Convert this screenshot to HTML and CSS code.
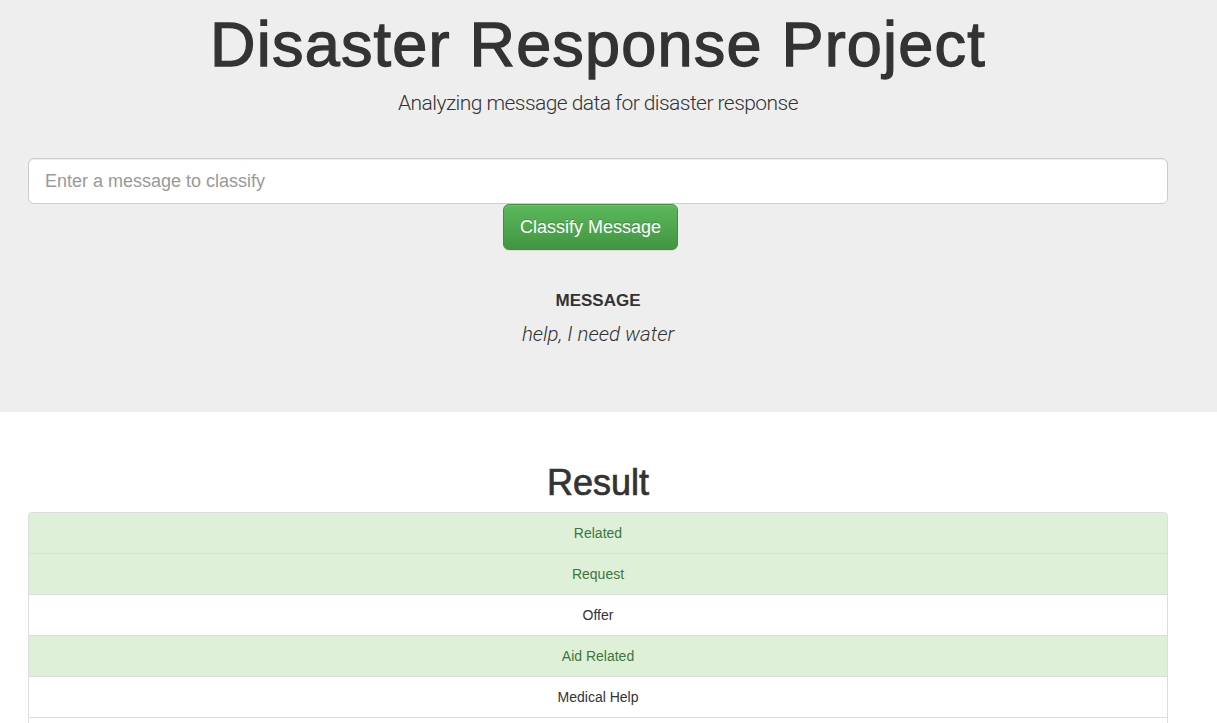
FILE: index.html
```html
<!DOCTYPE html>
<html lang="en">
<head>
<meta charset="utf-8">
<title>Disaster Response Project</title>
<link rel="stylesheet" href="styles.css">
</head>
<body>
  <header class="jumbotron">
    <div class="container">
      <h1 class="title">Disaster Response Project</h1>
      <p class="subtitle">Analyzing message data for disaster response</p>
      <form class="classify-form">
        <input class="form-input" type="text" placeholder="Enter a message to classify">
        <div class="btn-row">
          <button class="btn-success" type="button">Classify Message</button>
        </div>
      </form>
      <div class="message-block">
        <h4 class="message-label">MESSAGE</h4>
        <p class="message-text">help, I need water</p>
      </div>
    </div>
  </header>
  <main class="container results">
    <h1 class="result-title">Result</h1>
    <ul class="list-group">
      <li class="list-item success">Related</li>
      <li class="list-item success">Request</li>
      <li class="list-item">Offer</li>
      <li class="list-item success">Aid Related</li>
      <li class="list-item">Medical Help</li>
      <li class="list-item">Medical Products</li>
    </ul>
  </main>
</body>
</html>
```

FILE: styles.css
```css
* { box-sizing: border-box; }
html, body { margin: 0; padding: 0; }
body {
  font-family: "Liberation Sans", Arial, sans-serif;
  font-size: 14px;
  line-height: 1.42857;
  color: #333;
  background: #fff;
}
.container { width: 1140px; margin: 0 0 0 28px; }

.jumbotron {
  background: #eeeeee;
  height: 412px;
  padding-top: 10px;
}
.title {
  margin: 0;
  font-size: 63px;
  line-height: 69px;
  font-weight: 400;
  text-align: center;
  color: #333;
  letter-spacing: 1.2px;
  -webkit-text-stroke: 1.3px #333;
}
.subtitle {
  margin: 9px 0 0;
  font-family: Roboto, "Liberation Sans", sans-serif;
  font-weight: 300;
  font-size: 21px;
  line-height: 30px;
  text-align: center;
  color: #333;
  letter-spacing: -0.55px;
}
.classify-form { margin-top: 40px; }
.form-input {
  display: block;
  width: 100%;
  height: 46px;
  padding: 10px 16px;
  font-family: "Liberation Sans", Arial, sans-serif;
  font-size: 18px;
  color: #555;
  background: #fff;
  border: 1px solid #ccc;
  border-radius: 6px;
  box-shadow: inset 0 1px 1px rgba(0,0,0,.075);
  outline: none;
}
.form-input::placeholder { color: #999; }
.btn-row { display: flex; padding-left: 475px; }
.btn-success {
  height: 46px;
  width: 175px;
  padding: 0;
  white-space: nowrap;
  font-family: "Liberation Sans", Arial, sans-serif;
  font-size: 18px;
  line-height: 24px;
  color: #fff;
  background-image: linear-gradient(to bottom, #5cb85c 0, #419641 100%);
  border: 1px solid #3e8f3e;
  border-radius: 6px;
  box-shadow: inset 0 1px 0 rgba(255,255,255,.15), 0 1px 1px rgba(0,0,0,.075);
  text-shadow: 0 -1px 0 rgba(0,0,0,.2);
  cursor: pointer;
}
.message-block { text-align: center; margin-top: 41px; }
.message-label {
  margin: 0;
  font-size: 17px;
  line-height: 20px;
  font-weight: 700;
  color: #333;
}
.message-text {
  margin: 9px 0 0;
  font-family: Roboto, "Liberation Sans", sans-serif;
  font-weight: 300;
  font-style: italic;
  font-size: 20.5px;
  line-height: 28px;
  color: #333;
}

.results { padding-top: 51px; }
.result-title {
  margin: 0 0 9px;
  font-size: 36px;
  line-height: 40px;
  font-weight: 400;
  text-align: center;
  -webkit-text-stroke: 0.7px #333;
}
.list-group { list-style: none; margin: 0; padding: 0; }
.list-item {
  padding: 10px 15px;
  margin-bottom: -1px;
  line-height: 20px;
  text-align: center;
  background: #fff;
  border: 1px solid #ddd;
  color: #333;
}
.list-item:first-child { border-top-left-radius: 4px; border-top-right-radius: 4px; }
.list-item.success { background: #dff0d8; color: #3c763d; }
```
